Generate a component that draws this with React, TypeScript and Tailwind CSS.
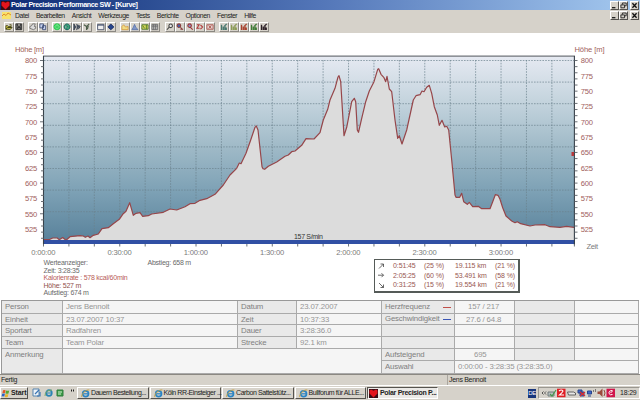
import React from 'react'

import clsx from 'clsx'

type Point = [number, number]

const profile: Point[] = [
  [43.7, 239.7], [50, 239.3], [52.7, 238], [57.3, 238], [59.3, 239.7], [62.7, 237.5],
  [66, 240.3], [70, 236.7], [80, 235.7], [83.3, 236], [85.3, 237.3], [88, 236],
  [90, 237.7], [93.3, 235.3], [98.3, 234], [102, 228.7], [108.3, 227.7], [113.3, 223.7],
  [119.3, 219.3], [122.7, 214.3], [126, 211.3], [129.7, 202.7], [133.3, 215.3], [136, 213.3],
  [140, 212.7], [142.7, 216.3], [148.3, 215.7], [151.7, 214], [163.3, 212.3], [170, 209],
  [176.7, 210], [185, 206.7], [190, 203.7], [195, 203.3], [200, 200.3], [206.7, 198.7],
  [215, 194.3], [223.3, 185], [230, 175], [236.7, 168.3], [239.3, 163], [241, 163.7],
  [246, 153.3], [250.7, 140], [255, 127.3], [256.3, 126], [258, 130], [262, 166.7],
  [263, 168.7], [264.7, 169.3], [268.3, 166.3], [276.7, 162], [285, 156.3], [288.3, 155],
  [291.7, 151.7], [295, 151], [301.7, 145.3], [306, 138.7], [314, 139], [320, 132.7],
  [323.3, 120], [327.7, 109.3], [330, 100], [335, 88.3], [338, 77], [339, 75.7],
  [340.7, 81.7], [344, 135.7], [346.7, 127.3], [351.7, 101.7], [354.3, 98.3], [355.7, 101.7],
  [357.3, 130], [358.5, 132.3], [361.7, 118.3], [365.7, 101.7], [369.3, 91], [374, 81.7],
  [377.7, 69.3], [378.7, 68.7], [381, 74.3], [384, 77.7], [385.7, 81.7], [387, 76.3],
  [389.3, 89], [391.7, 91.7], [395, 120], [397.7, 138.3], [399.3, 135.7], [402, 144],
  [406.7, 130], [413.3, 100], [416, 95.7], [420, 94.7], [422, 91], [424, 91.7],
  [426.7, 87.3], [429.3, 85.3], [431.7, 93.3], [434.3, 106.7], [437.3, 115], [439.3, 125.3],
  [442, 120.3], [444.7, 127], [446.7, 126.3], [448.7, 130], [451.7, 160], [455, 195],
  [456, 197.3], [459.7, 197.3], [461.7, 193.3], [463.7, 201.7], [467.3, 204.3], [469.3, 202.3],
  [472.7, 206.7], [478.3, 206.3], [481.7, 208.7], [490, 208.7], [492.7, 201.7], [495.3, 194.7],
  [498, 195.3], [500, 199.3], [502.7, 207.7], [506, 216], [511.7, 221], [515, 222.7],
  [517.3, 221.7], [520.7, 223.7], [530, 226], [535, 225], [545, 224.7], [550, 226.7],
  [560, 227.3], [566.7, 226.3], [574, 227.3],
]

const elevations = [800, 775, 750, 725, 700, 675, 650, 625, 600, 575, 550, 525]
const times = ['0:00:00', '0:30:00', '1:00:00', '1:30:00', '2:00:00', '2:30:00', '3:00:00']

const menus = [
  'Datei', 'Bearbeiten', 'Ansicht', 'Werkzeuge', 'Tests', 'Berichte', 'Optionen', 'Fenster', 'Hilfe',
]

const line = profile.map(p => p.join(',')).join(' ')

const Heart = ({ className }: { className?: string }) => (
  <svg viewBox="0 0 9 9" className={className}>
    <rect width="9" height="9" fill="#3a0c14" />
    <path d="M4.5 8.5 0.5 4.4V1.6L2 .5l2.5 1.2L7 .5l1.5 1.1v2.8z" fill="#e3141c" />
  </svg>
)

const WindowButtons = () => (
  <div className="flex h-[9px]">
    {['min', 'restore', 'close'].map(kind => (
      <div
        key={kind}
        className={clsx(
          'h-[9px] w-[9px] border border-t-white border-l-white border-r-[#55534f] border-b-[#55534f] bg-[#d6d2ca]',
          kind === 'close' && 'ml-[2px]'
        )}
      >
        <svg viewBox="0 0 7 7" className="block h-[7px] w-[7px]" fill="none" stroke="#111">
          {kind === 'min' && <path d="M1 5.7h3.4" strokeWidth="1.2" />}
          {kind === 'restore' && (
            <path d="M2.4 2.6V1h3.8v2.8H5M.9 2.9h3.6v2.9H.9z" strokeWidth=".8" />
          )}
          {kind === 'close' && <path d="m1.4 1.3 4.2 4.4m0-4.4L1.4 5.7" strokeWidth="1.3" />}
        </svg>
      </div>
    ))}
  </div>
)

const toolGroups: { gap: string; icons: React.ReactNode[] }[] = [
  {
    gap: 'ml-1',
    icons: [
      <path d="M1 7V3h2l1 1h3v1H3L1 7l5 .2L8 5H3M5 2h2v1" stroke="#3c3c10" fill="#cfc64b" />,
      <path d="M1 1h6.5v6.5H1zM3 1v2.500h3V1M3 7V5h3v2" stroke="#222" fill="#777" />,
    ],
  },
  {
    gap: 'ml-[4px]',
    icons: [
      <path d="M1 4l2-1 1-2h3L6 4h1.5v2L5 7.5 1 6z" stroke="#666" fill="#ddd" />,
      <path d="M1 1h4v4.5H1zM4 3h3.5v4.5H4z" stroke="#34446f" fill="#c9d3ee" />,
    ],
  },
  {
    gap: 'ml-[4px]',
    icons: [
      <path d="M4.5 1a3.300 3.300 0 1 0 .1 0M2.500 3.5h4M2.500 5.500h4" stroke="#22c94a" fill="#a5f5b2" strokeWidth="1.200" />,
      <path d="M4.5 1a3.300 3.300 0 1 0 .1 0M3 2.500l2 2-2 2" stroke="#17615c" fill="#3aa378" strokeWidth="1.100" />,
      <path d="M1 1v7l2-3.5zM4 1l2 3-2 4M6 2l2 2-2 3" stroke="#2a3342" fill="#4f5b6d" />,
      <path d="M1 2l3 2 3-3M4 4v4M6 3l-1 4" stroke="#4c5e4a" fill="none" strokeWidth="1.300" />,
    ],
  },
  {
    gap: 'ml-[4px]',
    icons: [
      <path d="M.7 1.5h7v6h-7zM.7 2.5h7" stroke="#3b4663" fill="#eee" />,
      <path d="M4.3 1 7.7 4.5 4.3 7.6 1 4.5z" stroke="#14265c" fill="#26448c" />,
    ],
  },
  {
    gap: 'ml-[4px]',
    icons: [
      <path d="M1 7.5V4l2-2 2 2.5 3-.5v3.5z" stroke="#d5993a" fill="#f1dc86" />,
      <path d="M1 7.5 2.5 5 4 1.5 5.5 5 8 7.5z" stroke="#5c74a8" fill="#7e95c9" />,
      <path d="M1 2h7v5H1zM2 3l2 3M6 2v5" stroke="#3d6f22" fill="#d8d85c" />,
      <path d="M1 1.5h6.5v6H1zM3 1.5v6M5.2 1.5v6M1 3.5h6.5" stroke="#666" fill="#bbb" />,
    ],
  },
  {
    gap: 'ml-[5px]',
    icons: [
      <path d="M5.200 1.2a2 2 0 1 0 .1 0M3.4 5 1 7.6" stroke="#444" fill="#e8e8e8" strokeWidth="1.200" />,
      <path d="M3.2 1a2 2 0 1 0 .1 0M5 5l2.5 2.5M5 7h3" stroke="#8a3d3a" fill="#4264b4" strokeWidth="1.200" />,
      <path d="M4 1a2 2 0 1 0 .1 0M5 5l2.5 2.5" stroke="#9c3434" fill="#8a90c8" strokeWidth="1.200" />,
      <path d="M1 2h2.500L1 6h3M5 2l2.500 2.500L5 7" stroke="#b23a3a" fill="none" strokeWidth="1.200" />,
      <path d="M1 2h7v5H1zM3 3l3 3m0-3L3 6" stroke="#a84a44" fill="#e3d1cc" />,
    ],
  },
  {
    gap: 'ml-[4px]',
    icons: ['#47766c', '#8a9a54', '#a8402c', '#3d7a34', '#2c1f26'].map(color => (
      <path key={color} d="M1.7 2v6M3.7 4v4M5.5 3v5M7 5v3M5 3.5 7.5 1" stroke={color} strokeWidth="1.5" fill="none" />
    )),
  },
]

const Toolbar = () => (
  <div className="flex h-3 shrink-0 items-center bg-[#d6d2ca] pb-px">
    {toolGroups.map((group, i) => (
      <div key={i} className={clsx('flex', group.gap)}>
        {group.icons.map((icon, j) => (
          <div
            key={j}
            className="h-[10px] w-[10px] border border-t-white border-l-white border-r-[#8b8882] border-b-[#8b8882]"
          >
            <svg viewBox="0 0 9 9" className="block h-2 w-2" strokeWidth=".9">
              {icon}
            </svg>
          </div>
        ))}
      </div>
    ))}
  </div>
)

const ElevationChart = () => (
  <svg
    viewBox="0 33 640 225"
    className="block h-[225px] w-[640px] shrink-0 font-['Liberation_Sans'] text-[7.6px]"
  >
    <defs>
      <linearGradient id="sky" x1="0" y1="0" x2="0" y2="1">
        <stop offset="0" stopColor="#e6eaf2" />
        <stop offset=".27" stopColor="#c0d1db" />
        <stop offset=".5" stopColor="#9db8c6" />
        <stop offset=".72" stopColor="#7da1b5" />
        <stop offset="1" stopColor="#578099" />
      </linearGradient>
    </defs>
    <rect x="44" y="56" width="530" height="188" fill="url(#sky)" />
    <g stroke="#6b838e" strokeWidth=".7" strokeDasharray="1.6 1.2">
      {Array.from({ length: 8 }, (_, i) => (
        <path key={i} d={`M44 ${60.5 + i * 21.6}H574`} />
      ))}
      {Array.from({ length: 20 }, (_, i) => (
        <path key={i} d={`M${68.9 + i * 25.42} 60V240`} />
      ))}
    </g>
    <polygon points={`43.7,241 ${line} 574,241`} fill="#dcdcdc" />
    <polyline points={line} fill="none" stroke="#96464a" strokeWidth="1.2" strokeLinejoin="round" />
    <rect x="43" y="240" width="532" height="4" fill="#3150a4" />
    <path d="M43 56.2H575" stroke="#70757a" strokeWidth="1.2" />
    <path d="M43.5 56V244.5M574.4 56V244.5" stroke="#37414a" strokeWidth="1.1" />
    <g stroke="#5a6066" strokeWidth=".9">
      {Array.from({ length: 30 }, (_, i) => (
        <path key={i} d={`M${i % 5 ? 41 : 40} ${60.5 + i * 6.13}h3M574.5 ${60.5 + i * 6.13}h3`} />
      ))}
      {Array.from({ length: 21 }, (_, i) => (
        <path key={i} d={`M${43.5 + i * 25.42} 244v2.5`} />
      ))}
      <path d="M574.4 244v2.5" />
    </g>
    <rect x="571.5" y="152" width="2.5" height="4" fill="#b5373a" />
    <g fill="#a0605a">
      <text x="15" y="52" textLength="29">Höhe [m]</text>
      <text x="574.5" y="52" textLength="30">Höhe [m]</text>
      {elevations.map((e, i) => (
        <React.Fragment key={e}>
          <text x="25" y={63.3 + i * 15.33} textLength="12.3">{e}</text>
          <text x="580.7" y={63.3 + i * 15.33} textLength="12.3">{e}</text>
        </React.Fragment>
      ))}
    </g>
    <g fill="#7a7a7a">
      {times.map((t, i) => (
        <text key={t} x={31.2 + i * 76.27} y="255.2" textLength="24.3">{t}</text>
      ))}
      <text x="586.5" y="248.7" textLength="11.5">Zeit</text>
    </g>
    <text x="294" y="239" textLength="29" fill="#333" className="text-[7px]">157 S/min</text>
  </svg>
)

const slopes = [
  { arrow: 'M1 5.5 5.5 1M2.5 1h3v3', time: '0:51:45', share: '(25 %)', km: '19.115 km', kmShare: '(21 %)' },
  { arrow: 'M0 3.2h5.5M3.5 1.2l2 2-2 2', time: '2:05:25', share: '(60 %)', km: '53.491 km', kmShare: '(58 %)' },
  { arrow: 'M1 1l4.5 4.5M5.5 2.5v3h-3', time: '0:31:25', share: '(15 %)', km: '19.554 km', kmShare: '(21 %)' },
]

const Summary = () => (
  <div className="flex h-[42px] shrink-0 pl-[43.5px] text-[7px] leading-[7.6px] tracking-[-0.23px] whitespace-nowrap text-[#6a6a6a]">
    <div className="w-[104px] pt-px">
      <p>Werteanzeiger:</p>
      <p>Zeit: 3:28:35</p>
      <p className="text-[#b85c58]">Kalorienrate : 578 kcal/60min</p>
      <p className="text-[#90504c]">Höhe: 527 m</p>
      <p>Aufstieg: 674 m</p>
    </div>
    <div className="w-[226.5px] pt-px">Abstieg: 658 m</div>
    <div className="mt-[1px] flex h-[34px] w-[146px] flex-col justify-center border border-r-2 border-b-2 border-[#555b58] bg-white tracking-[-0.1px] text-[#985852]">
      {slopes.map(row => (
        <div
          key={row.time}
          className="grid h-[9.5px] grid-cols-[18px_31px_31px_40px_24px] items-center"
        >
          <svg viewBox="0 0 7 7" className="ml-[3px] h-[7px] w-[7px]" fill="none" stroke="#444" strokeWidth=".8">
            <path d={row.arrow} />
          </svg>
          <span>{row.time}</span>
          <span>{row.share}</span>
          <span>{row.km}</span>
          <span>{row.kmShare}</span>
        </div>
      ))}
    </div>
  </div>
)

interface CellProps {
  label?: boolean
  className?: string
  children?: React.ReactNode
}

const Cell: React.FC<CellProps> = ({ label, className, children }) => (
  <div
    className={clsx(
      'h-full border-r border-b border-[#aaa] whitespace-nowrap',
      label ? 'bg-[#e9e9e9] text-[#808080]' : 'bg-[#f5f5f5] text-[#969696]',
      className ?? 'pl-[3px]'
    )}
  >
    {children}
  </div>
)

const rows = [
  ['Person', 'Jens Bennoit', 'Datum', '23.07.2007'],
  ['Einheit', '23.07.2007 10:37', 'Zeit', '10:37:33'],
  ['Sportart', 'Radfahren', 'Dauer', '3:28:36.0'],
  ['Team', 'Team Polar', 'Strecke', '92.1 km'],
]

const InfoTable = () => (
  <div className="mx-px flex h-[74px] shrink-0 border-t border-l border-[#999] text-[7.8px] leading-[12px] tracking-[-0.15px]">
    <div className="grid w-[380px] grid-cols-[61px_175px_59px_85px] grid-rows-[13px_11px_12px_12px_25px]">
      {rows.map(([a, b, c, d]) => (
        <React.Fragment key={a}>
          <Cell label>{a}</Cell>
          <Cell>{b}</Cell>
          <Cell label>{c}</Cell>
          <Cell>{d}</Cell>
        </React.Fragment>
      ))}
      <Cell label>Anmerkung</Cell>
      <Cell className="col-span-3" />
    </div>
    <div className="grid flex-1 grid-cols-[73px_60px_60px_64px] grid-rows-[13px_11px_12px_12px_12px_13px]">
      <Cell label className="flex items-center justify-between pr-[3px] pl-[3px]">
        Herzfrequenz <i className="h-px w-2 shrink-0 bg-[#c0504a]" />
      </Cell>
      <Cell className="pl-[13px]">157 / 217</Cell>
      <Cell label />
      <Cell />
      <Cell label className="flex items-center justify-between pr-[3px] pl-[3px]">
        Geschwindigkeit <i className="h-px w-2 shrink-0 bg-[#3a55b5]" />
      </Cell>
      <Cell className="pl-[11px]">27.6 / 64.8</Cell>
      <Cell label />
      <Cell />
      <Cell label />
      <Cell />
      <Cell label />
      <Cell />
      <Cell label />
      <Cell />
      <Cell label />
      <Cell />
      <Cell label>Aufsteigend</Cell>
      <Cell className="pl-[19px]">695</Cell>
      <Cell label />
      <Cell />
      <Cell label>Auswahl</Cell>
      <Cell className="col-span-3 pl-[3px]">0:00:00 - 3:28:35 (3:28:35.0)</Cell>
    </div>
  </div>
)

const Explorer = ({ className }: { className?: string }) => (
  <svg viewBox="0 0 9 9" className={className} fill="none">
    <circle cx="4.6" cy="4.8" r="2.9" stroke="#2b84c4" strokeWidth="1.7" />
    <path d="M2.5 4.8h5.4" stroke="#2b84c4" strokeWidth="1.2" />
    <path d="M.8 8C-.2 5.5 4.5.2 8.4 1" stroke="#c9a33c" strokeWidth=".9" />
  </svg>
)

const tasks = ['Dauern Bestellung...', 'Köln RR-Einsteiger ...', 'Carbon Sattelstütz...', 'Bullforum für ALLE...']

const Taskbar = () => (
  <div className="flex h-[15px] shrink-0 items-center border-t border-white bg-[#d6d2ca] text-[7px] whitespace-nowrap text-[#222]">
    <div className="flex h-3 w-7 items-center border border-t-white border-l-white border-r-[#55534f] border-b-[#55534f] font-bold tracking-[-0.1px]">
      <svg viewBox="0 0 9 9" className="mr-px h-[9px] w-[9px] shrink-0">
        <path d="M2 1.3q1.5-.8 2.6 0L4 4.2q-1.3-.6-2.6 0z" fill="#e0582a" />
        <path d="M5 1.5q1.5.7 3.2 0l-.7 3q-1.5.6-3 0z" fill="#58a830" />
        <path d="M1.2 4.7q1.4-.6 2.7 0l-.6 2.8q-1.4-.6-2.7 0z" fill="#2d62c4" />
        <path d="M4.4 5q1.5.6 3 0l-.7 2.9q-1.5.5-3 0z" fill="#e8b52c" />
      </svg>
      Start
    </div>
    <svg viewBox="0 0 44 10" className="ml-1 h-[10px] w-11 shrink-0" fill="none">
      <path d="M1 1h6v7H1z" fill="#eef3f8" stroke="#5784ae" />
      <path d="m3 6 4-4M5 8h3V4" stroke="#3b76b4" strokeWidth="1.2" />
      <circle cx="17" cy="5" r="2.8" stroke="#2b84b4" strokeWidth="1.7" />
      <path d="M14.5 5h5" stroke="#2b84b4" />
      <path d="M13 8q0-6 7-6" stroke="#78a868" />
      <path d="M25 2h6v6h-6z" fill="#3c9c48" stroke="#2d7d3a" />
      <path d="M26 4h4M26 6h3" stroke="#d6f0d0" />
      <path d="m39.500 1.500v2m2-2v2" stroke="#222" />
    </svg>
    {tasks.map(task => (
      <div
        key={task}
        className="ml-px flex h-3 w-[71.5px] shrink-0 items-center border border-t-white border-l-white border-r-[#55534f] border-b-[#55534f] pl-[3px] tracking-[-0.42px]"
      >
        <Explorer className="mr-px h-[9px] w-[9px] shrink-0" />
        {task}
      </div>
    ))}
    <div className="ml-px flex h-3 w-[71px] shrink-0 items-center border border-t-[#55534f] border-l-[#55534f] border-r-white border-b-white bg-[#ebe9e6] pl-px font-bold tracking-[-0.3px]">
      <Heart className="mr-0.5 h-[9px] w-[9px] shrink-0" />
      Polar Precision P...
    </div>
    <div className="ml-auto h-[9px] w-2 bg-[#17357c] text-center text-[6px] leading-[9px] tracking-[-0.4px] text-white">
      DE
    </div>
    <div className="ml-0.5 flex h-3 w-[102px] items-center border border-t-[#9a9790] border-l-[#9a9790] border-r-white border-b-white">
      <svg viewBox="0 0 78 10" className="h-[10px] w-[78px] shrink-0" fill="none">
        <path d="m4.500 3.500-1.5 1.500 1.500 1.500m2.500-3L5.500 5 7 6.500" stroke="#333" strokeWidth=".8" />
        <path d="M9 4h6v4H9z" fill="#b9bfc2" stroke="#707b7b" />
        <path d="m11 6 2 2 4-6" stroke="#46964b" strokeWidth="1.2" />
        <rect x="18" y=".7" width="8.500" height="8.500" fill="#df1f25" />
        <path d="M20 3q2.500-2 4 0-1 2-3.500 4H25" stroke="#fff" strokeWidth="1.1" />
        <path d="M28.500 4h6l2 1v2h-7z" fill="#e8e8e8" stroke="#555" strokeWidth=".9" />
        <path d="M39 2h4v3h-4zM41 4h4v4h-4z" fill="#3e68cc" stroke="#28458c" />
        <path d="m41 4 5 4m0-4-5 4" stroke="#dc2c2c" strokeWidth="1.300" />
        <path d="M48.500 3h4v3h-4zM49 8h3" fill="#3e68cc" stroke="#28458c" />
        <path d="M54.500 2v2m2-3v3" stroke="#555" strokeWidth=".7" />
        <path d="M58.500 3.500h2l3-3v8.500l-3-3h-2z" fill="#9a4b3b" />
        <path d="M65 2q2 3 0 6" stroke="#9a4b3b" />
        <rect x="67.500" y=".7" width="8.500" height="8.500" fill="#d0164c" />
        <path d="M73.500 2.500q-4 0-3.500 3 1 2 3.500 1M71.500 5l2-2" stroke="#fff" />
      </svg>
      <span className="ml-[3px] tracking-[-0.2px]">18:29</span>
    </div>
  </div>
)

const App: React.FC = () => (
  <div className="flex h-[400px] w-[640px] flex-col overflow-hidden bg-white font-['Liberation_Sans',sans-serif]">
    <div className="flex h-[10px] shrink-0 items-center justify-between bg-linear-to-r from-[#0d2b74] via-[#5376b8] to-[#a6caf0] pr-px">
      <div className="flex items-center pl-px text-[7.2px] leading-[10px] font-bold tracking-[-0.42px] whitespace-nowrap text-white">
        <Heart className="mr-px h-[9px] w-[9px]" />
        Polar Precision Performance SW - [Kurve]
      </div>
      <WindowButtons />
    </div>
    <div className="flex h-[11px] shrink-0 items-center justify-between bg-[#d6d2ca] pr-px">
      <div className="flex items-center gap-[7px] pl-[2px] text-[6.8px] leading-[10px] tracking-[-0.4px] text-[#222]">
        <svg viewBox="0 0 9 9" className="-mr-[3px] h-[9px] w-[9px]">
          <rect y="1" width="9" height="7" fill="#f8e36c" />
          <path d="M0 5l2-2 2 1.500L6 2l3 2" fill="none" stroke="#e08a2e" />
        </svg>
        {menus.map(menu => (
          <span key={menu}>{menu}</span>
        ))}
      </div>
      <WindowButtons />
    </div>
    <Toolbar />
    <ElevationChart />
    <Summary />
    <InfoTable />
    <div className="flex h-[11px] shrink-0 border-t border-[#8b8882] bg-[#d6d2ca] text-[7px] leading-[10px] tracking-[-0.3px] text-[#222]">
      <div className="w-[448px] border-r border-[#aaa69f] pl-px">Fertig</div>
      <div className="pl-px">Jens Bennoit</div>
    </div>
    <Taskbar />
  </div>
)

export default App
